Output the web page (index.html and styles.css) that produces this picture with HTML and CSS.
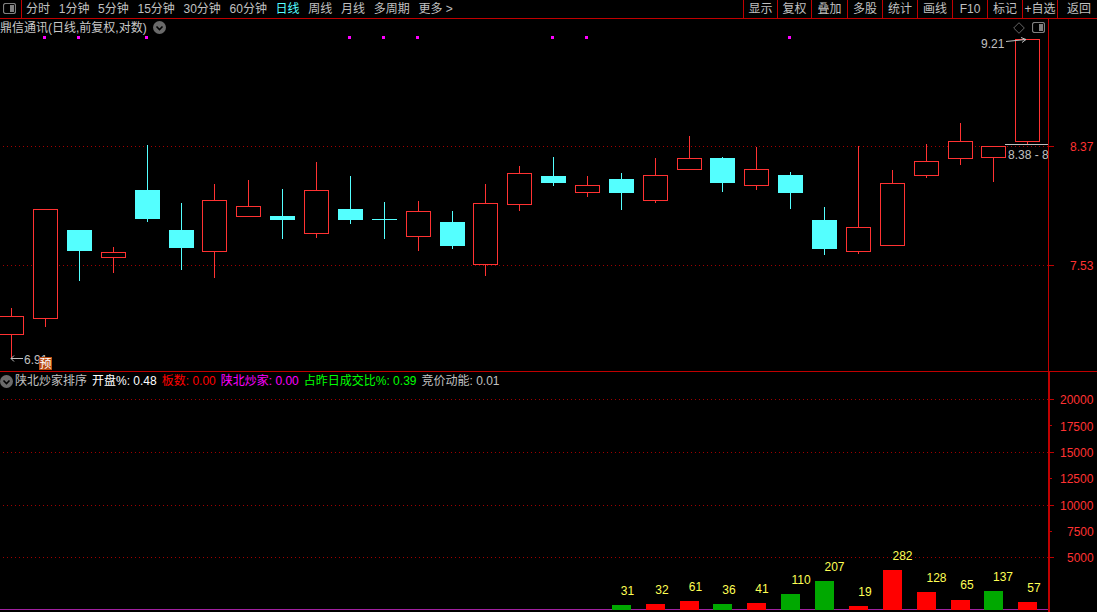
FILE: index.html
```html
<!DOCTYPE html>
<html lang="zh-CN">
<head>
<meta charset="utf-8">
<title>鼎信通讯</title>
<link rel="stylesheet" href="styles.css">
</head>
<body>
<div class="app">
  <header class="toolbar">
    <div class="toggle-cell">
      <svg class="toggle" width="13" height="11" viewBox="0 0 13 11"><rect class="toggle-box" x="0.5" y="0.5" width="12" height="10" rx="2"/><rect class="toggle-fill" x="7" y="2" width="4" height="7"/></svg>
    </div>
    <nav class="periods">
      <span>分时</span><span>1分钟</span><span>5分钟</span><span>15分钟</span><span>30分钟</span><span>60分钟</span><span class="active">日线</span><span>周线</span><span>月线</span><span>多周期</span><span>更多 &gt;</span>
    </nav>
    <div class="actions">
      <span class="action">显示</span><span class="action">复权</span><span class="action wide">叠加</span><span class="action n">多股</span><span class="action n">统计</span><span class="action n">画线</span><span class="action n">F10</span><span class="action n">标记</span><span class="action n">+自选</span><span class="action last">返回</span>
    </div>
  </header>

  <section class="panel upper">
    <div class="plot">
      <div class="title-row">
        <span class="stock">鼎信通讯(日线,前复权,对数)</span>
        <svg class="chevron" width="13" height="13" viewBox="0 0 13 13"><circle class="chevron-disc" cx="6.5" cy="6.5" r="6.5"/><path class="chevron-mark" d="M3.5 5.5 L6.5 8.5 L9.5 5.5"/></svg>
        <span class="spacer"></span>
        <svg class="diamond" width="12" height="12" viewBox="0 0 12 12"><path class="diamond-line" d="M6 .7 L11.3 6 L6 11.3 L.7 6 Z"/></svg>
        <svg class="toggle right" width="13" height="11" viewBox="0 0 13 11"><rect class="toggle-box" x="0.5" y="0.5" width="12" height="10" rx="2"/><rect class="toggle-fill" x="7" y="2" width="4" height="7"/></svg>
      </div>
      <svg class="chart" width="1048" height="335" viewBox="0 36 1048 335">
        <path class="grid" d="M3 146.5H1048M3 265.5H1048"/>
        <g class="marks">
          <rect x="43" y="36" width="3" height="3"/><rect x="77" y="36" width="3" height="3"/><rect x="145" y="36" width="3" height="3"/><rect x="348" y="36" width="3" height="3"/><rect x="382" y="36" width="3" height="3"/><rect x="416" y="36" width="3" height="3"/><rect x="551" y="36" width="3" height="3"/><rect x="585" y="36" width="3" height="3"/><rect x="788" y="36" width="3" height="3"/>
        </g>
        <g class="up">
          <path d="M11.5 308V358"/><rect x="-1.5" y="316.5" width="25" height="18"/>
          <path d="M45.5 318V327"/><rect x="33.5" y="209.5" width="24" height="109"/>
          <path d="M113.5 247V273"/><rect x="101.5" y="252.5" width="24" height="5"/>
          <path d="M214.5 184V278"/><rect x="202.5" y="200.5" width="24" height="51"/>
          <path d="M248.5 180V207"/><rect x="236.5" y="206.5" width="24" height="10"/>
          <path d="M316.5 162V238"/><rect x="304.5" y="190.5" width="24" height="43"/>
          <path d="M418.5 201V251"/><rect x="406.5" y="211.5" width="24" height="25"/>
          <path d="M485.5 184V276"/><rect x="473.5" y="203.5" width="24" height="61"/>
          <path d="M519.5 166V211"/><rect x="507.5" y="173.5" width="24" height="31"/>
          <path d="M587.5 176V197"/><rect x="575.5" y="185.5" width="24" height="7"/>
          <path d="M655.5 158V203"/><rect x="643.5" y="175.5" width="24" height="25"/>
          <path d="M689.5 136V159"/><rect x="677.5" y="158.5" width="24" height="11"/>
          <path d="M756.5 147V190"/><rect x="744.5" y="169.5" width="24" height="16"/>
          <path d="M858.5 146V254"/><rect x="846.5" y="227.5" width="24" height="24"/>
          <path d="M892.5 170V184"/><rect x="880.5" y="183.5" width="24" height="62"/>
          <path d="M926.5 144V178"/><rect x="914.5" y="161.5" width="24" height="14"/>
          <path d="M960.5 123V165"/><rect x="948.5" y="141.5" width="24" height="17"/>
          <path d="M993.5 146V182"/><rect x="981.5" y="146.5" width="24" height="11"/>
          <path d="M1027.5 141V144"/><rect x="1015.5" y="39.5" width="24" height="102"/>
        </g>
        <g class="down">
          <path d="M79.5 251V281"/><rect x="67" y="230" width="25" height="21"/>
          <path d="M147.5 145V222"/><rect x="135" y="190" width="25" height="29"/>
          <path d="M181.5 203V270"/><rect x="169" y="230" width="25" height="18"/>
          <path d="M282.5 189V239"/><rect x="270" y="216" width="25" height="4"/>
          <path d="M350.5 176V224"/><rect x="338" y="209" width="25" height="11"/>
          <path d="M384.5 202V239"/><rect x="372" y="219" width="25" height="1"/>
          <path d="M452.5 211V249"/><rect x="440" y="222" width="25" height="24"/>
          <path d="M553.5 157V186"/><rect x="541" y="176" width="25" height="7"/>
          <path d="M621.5 173V210"/><rect x="609" y="179" width="25" height="14"/>
          <path d="M722.5 157V192"/><rect x="710" y="158" width="25" height="25"/>
          <path d="M790.5 172V209"/><rect x="778" y="175" width="25" height="18"/>
          <path d="M824.5 207V255"/><rect x="812" y="220" width="25" height="29"/>
        </g>
        <path class="callout" d="M1006 41.5 L1026 39.5M1021 37.5L1026 39.5L1022 42.5M11 358.5H23M14 355.5L11 358.5L14 361.5M1005 144.5H1048"/>
        <text class="note" x="981" y="48">9.21</text>
        <text class="note" x="1008" y="159">8.38 - 8</text>
        <text class="note" x="24" y="364">6.91</text>
        <rect class="pre-bg" x="39" y="357" width="13" height="13"/>
        <text class="pre" x="45.5" y="368">预</text>
      </svg>
    </div>
    <svg class="axis" width="48" height="352" viewBox="1049 19 48 352">
      <path class="tick" d="M1049 146.5H1054M1049 265.5H1054"/>
      <text class="axis-label" x="1070" y="151">8.37</text>
      <text class="axis-label" x="1070" y="270">7.53</text>
    </svg>
  </section>

  <section class="panel lower">
    <div class="plot">
      <div class="legend">
        <svg class="chevron first" width="13" height="13" viewBox="0 0 13 13"><circle class="chevron-disc" cx="6.5" cy="6.5" r="6.5"/><path class="chevron-mark" d="M3.5 5.5 L6.5 8.5 L9.5 5.5"/></svg>
        <span class="l-gray">陕北炒家排序</span>
        <span class="l-white">开盘%: 0.48</span>
        <span class="l-red">板数: 0.00</span>
        <span class="l-magenta">陕北炒家: 0.00</span>
        <span class="l-green">占昨日成交比%: 0.39</span>
        <span class="l-gray">竞价动能: 0.01</span>
      </div>
      <svg class="chart" width="1048" height="221" viewBox="0 391 1048 221">
        <path class="grid" d="M3 399.5H1048M3 452.5H1048M3 505.5H1048M3 557.5H1048"/>
        <path class="baseline" d="M0 609.5H1048"/>
        <g class="bar-green">
          <rect x="612" y="605" width="19" height="5"/><rect x="713" y="604" width="19" height="6"/><rect x="781" y="594" width="19" height="16"/><rect x="815" y="581" width="19" height="29"/><rect x="984" y="591" width="19" height="19"/>
        </g>
        <g class="bar-red">
          <rect x="646" y="604" width="19" height="6"/><rect x="680" y="601" width="19" height="9"/><rect x="747" y="603" width="19" height="7"/><rect x="849" y="606" width="19" height="4"/><rect x="883" y="570" width="19" height="40"/><rect x="917" y="592" width="19" height="18"/><rect x="951" y="600" width="19" height="10"/><rect x="1018" y="602" width="19" height="8"/>
        </g>
        <g class="bar-label">
          <text x="627.5" y="595">31</text><text x="662" y="594">32</text><text x="695.5" y="591">61</text><text x="729" y="594">36</text><text x="762" y="593">41</text><text x="801" y="584">110</text><text x="834.5" y="571">207</text><text x="865" y="596">19</text><text x="902.5" y="560">282</text><text x="936.5" y="582">128</text><text x="967" y="589">65</text><text x="1003" y="581">137</text><text x="1034" y="592">57</text>
        </g>
      </svg>
    </div>
    <svg class="axis thick" width="47" height="240" viewBox="1050 372 47 240">
      <path class="tick" d="M1050 399.5H1054M1050 452.5H1054M1050 505.5H1054M1050 557.5H1054M1050 425.5H1052M1050 478.5H1052M1050 531.5H1052"/>
      <text class="axis-label" x="1060" y="404">20000</text>
      <text class="axis-label" x="1060" y="431">17500</text>
      <text class="axis-label" x="1060" y="457">15000</text>
      <text class="axis-label" x="1060" y="483">12500</text>
      <text class="axis-label" x="1060" y="510">10000</text>
      <text class="axis-label" x="1067" y="536">7500</text>
      <text class="axis-label" x="1067" y="562">5000</text>
    </svg>
  </section>
</div>
</body>
</html>
```
FILE: styles.css
```css
* { box-sizing: border-box; }
html, body {
  margin: 0;
  height: 100%;
  background: #000;
  overflow: hidden;
}
body {
  font: 12px/16px "Liberation Sans", "Noto Sans CJK SC", sans-serif;
  color: #c0c0c0;
}
svg { display: block; }
text { font-family: "Liberation Sans", "Noto Sans CJK SC", sans-serif; font-size: 12px; }

.app { width: 1097px; height: 612px; display: flex; flex-direction: column; }

.toolbar {
  height: 19px;
  display: flex;
  align-items: stretch;
  border-bottom: 1px solid #c00000;
  flex: none;
}
.toggle-cell {
  width: 22px;
  flex: none;
  border-right: 1px solid #c00000;
  padding: 3px 0 0 3px;
}
.toggle-box { fill: none; stroke: #808080; stroke-width: 1.2; }
.toggle-fill { fill: #808080; }
.periods {
  flex: 1;
  display: flex;
  gap: 8.7px;
  padding: 1px 0 0 4px;
  white-space: nowrap;
}
.active { color: #54ffff; }
.actions { display: flex; flex: none; }
.action {
  width: 34px;
  border-left: 1px solid #c00000;
  padding-top: 1px;
  text-align: center;
  white-space: nowrap;
}
.action.wide { width: 36px; }
.action.n { width: 35px; }
.action.last { width: 40px; padding-left: 3px; }

.panel { display: flex; flex: none; }
.upper { height: 353px; border-bottom: 1px solid #c00000; }
.lower { height: 240px; }
.plot { width: 1048px; flex: none; display: flex; flex-direction: column; }
.axis { border-left: 1px solid #c00000; width: 49px; flex: none; }
.axis.thick { border-left-width: 2px; }

.title-row { height: 17px; display: flex; align-items: center; }
.stock { color: #c8c8c8; }
.chevron { margin-left: 6px; }
.chevron.first { margin-left: 0; }
.chevron-disc { fill: #6a6a6a; }
.chevron-mark { fill: none; stroke: #000; stroke-width: 1.6; }
.spacer { flex: 1; }
.diamond-line { fill: none; stroke: #666; }
.toggle.right { margin: 0 3px 0 7px; }

.grid { fill: none; stroke: #a00000; stroke-dasharray: 1 3; }
.marks rect { fill: #ff00ff; }
.up path, .up rect { stroke: #ff3232; shape-rendering: crispEdges; }
.up path { fill: none; }
.up rect { fill: #000; }
.down path { stroke: #54ffff; fill: none; shape-rendering: crispEdges; }
.down rect { fill: #54ffff; }
.callout { fill: none; stroke: #c0c0c0; }
.note { fill: #c0c0c0; }
.pre-bg { fill: #b84a10; }
.pre { fill: #fff; text-anchor: middle; }

.tick { stroke: #c00000; fill: none; }
.axis-label { fill: #ff3232; }

.legend {
  height: 19px;
  padding-bottom: 1px;
  display: flex;
  align-items: center;
  gap: 5px;
  white-space: nowrap;
}
.legend .first { margin-right: -3px; }
.l-gray { color: #c0c0c0; }
.l-white { color: #fff; }
.l-red { color: #ff0000; }
.l-magenta { color: #ff00ff; }
.l-green { color: #00ff00; }

.baseline { stroke: #a020a0; fill: none; }
.bar-green rect { fill: #00a800; }
.bar-red rect { fill: #ff0000; }
.bar-label text { fill: #ffff54; text-anchor: middle; }
```
